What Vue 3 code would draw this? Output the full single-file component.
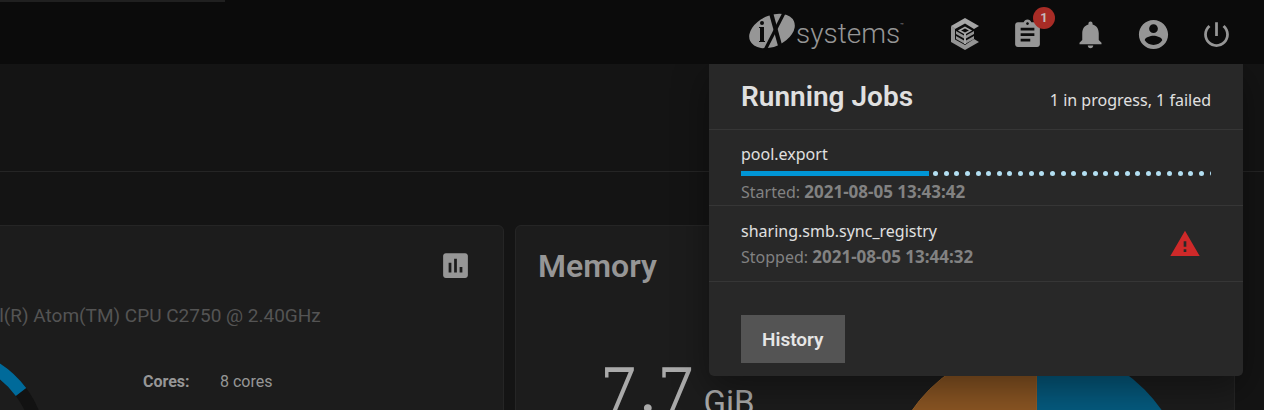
<script setup>
const jobs = [
  { name: 'pool.export', label: 'Started:', time: '2021-08-05 13:43:42', progress: 40 },
  { name: 'sharing.smb.sync_registry', label: 'Stopped:', time: '2021-08-05 13:44:32', failed: true },
]
const dots = 27
</script>

<template>
  <div class="page">
    <header class="topbar">
      <div class="loading"></div>
      <a class="brand" href="#" aria-label="iXsystems">
        <svg class="oval" viewBox="0 0 48 38" aria-hidden="true">
          <ellipse cx="24" cy="18" rx="24" ry="15.500" transform="rotate(-24 24 18)" fill="#969696" />
          <path d="M36 0L17 37" fill="none" stroke="#0b0b0b" stroke-width="3.200" />
          <path d="M23 0L33 36" fill="none" stroke="#0b0b0b" stroke-width="4.200" />
          <circle cx="14" cy="10" r="2" fill="#0b0b0b" />
          <path d="M12 14h4v14h1v1h-6v-1h1V15h-1v-1z" fill="#0b0b0b" />
        </svg>
        <span class="word">systems</span><span class="tm">™</span>
      </a>
      <nav class="actions">
        <button type="button" aria-label="TrueCommand">
          <svg width="30" height="32" viewBox="0 0 30 32" aria-hidden="true">
            <path fill="#a6a6a6" d="M15 0L29 8 24 11 15 5.500 5 11 1 8z" />
            <path fill="#949494" d="M1 8L5 10.500V21.500L15 27 24 21 29 24 15 32 1 24z" />
            <path fill="none" stroke="#a6a6a6" stroke-width="1.600" d="M15 9.500l5.500 3-5.500 3-5.500-3z" />
            <path fill="#949494" d="M6 13l8 4.500v3L6 16zM24 13l-8 4.500v3l8-4.500zM6 18l8 4.500v3L6 21zM24 18l-8 4.500v3l8-4.500z" />
            <path fill="#a6a6a6" d="M14 16h2v10h-2z" />
          </svg>
        </button>
        <button type="button" aria-label="Jobs">
          <svg width="33" height="33" viewBox="0 0 24 24" aria-hidden="true"><path d="M19 3h-4.180C14.400 1.840 13.300 1 12 1c-1.300 0-2.400.84-2.820 2H5c-1.100 0-2 .9-2 2v14c0 1.100.9 2 2 2h14c1.100 0 2-.9 2-2V5c0-1.100-.9-2-2-2zm-7 0c.55 0 1 .45 1 1s-.45 1-1 1-1-.45-1-1 .45-1 1-1zm2 14H7v-2h7v2zm3-4H7v-2h10v2zm0-4H7V7h10v2z" /></svg>
          <span class="badge">1</span>
        </button>
        <button type="button" aria-label="Alerts">
          <svg width="33" height="33" viewBox="0 0 24 24" aria-hidden="true"><path d="M12 22c1.100 0 2-.9 2-2h-4c0 1.100.89 2 2 2zm6-6v-5c0-3.070-1.640-5.640-4.500-6.320V4c0-.83-.67-1.500-1.500-1.500s-1.500.67-1.500 1.500v.68C7.630 5.360 6 7.920 6 11v5l-2 2v1h16v-1l-2-2z" /></svg>
        </button>
        <button type="button" aria-label="Account">
          <svg width="35" height="35" viewBox="0 0 24 24" aria-hidden="true"><path d="M12 2C6.480 2 2 6.480 2 12s4.480 10 10 10 10-4.480 10-10S17.520 2 12 2zm0 3c1.660 0 3 1.340 3 3s-1.340 3-3 3-3-1.340-3-3 1.340-3 3-3zm0 14.200c-2.500 0-4.710-1.280-6-3.220.03-1.990 4-3.080 6-3.080 1.990 0 5.970 1.090 6 3.080-1.290 1.940-3.500 3.220-6 3.220z" /></svg>
        </button>
        <button type="button" aria-label="Power">
          <svg width="33" height="33" viewBox="0 0 24 24" aria-hidden="true"><path d="M13 3h-2v10h2V3zm4.830 2.170l-1.420 1.420C17.990 7.860 19 9.810 19 12c0 3.870-3.130 7-7 7s-7-3.130-7-7c0-2.190 1.010-4.140 2.580-5.420L6.170 5.170C4.230 6.820 3 9.260 3 12c0 4.970 4.030 9 9 9s9-4.030 9-9c0-2.740-1.230-5.180-3.170-6.830z" /></svg>
        </button>
      </nav>

      <section class="panel" aria-label="Running Jobs">
        <div class="panel-head">
          <h2>Running Jobs</h2>
          <span class="summary">1 in progress, 1 failed</span>
        </div>
        <div v-for="job in jobs" :key="job.name" class="job" :class="{ active: job.progress }">
          <div class="job-body">
            <div class="job-name">{{ job.name }}</div>
            <div v-if="job.progress" class="progress" role="progressbar" :aria-label="job.name" :aria-valuenow="job.progress">
              <div class="bar" :style="{ width: job.progress + '%' }"></div>
              <div class="dots"><i v-for="n in dots" :key="n"></i></div>
            </div>
            <div class="job-time">{{ job.label }} <strong>{{ job.time }}</strong></div>
          </div>
          <svg v-if="job.failed" class="warn" viewBox="0 0 24 24" role="img" aria-label="Failed"><path d="M1 21h22L12 2 1 21zm12-3h-2v-2h2v2zm0-4h-2v-4h2v4z" /></svg>
        </div>
        <div class="panel-foot"><button type="button" class="history">History</button></div>
      </section>
    </header>

    <div class="subbar"></div>

    <main class="cards">
      <article class="card">
        <div class="card-head end">
          <button type="button" class="report" aria-label="CPU reports">
            <svg width="33" height="33" viewBox="0 0 24 24" aria-hidden="true"><path d="M19 3H5c-1.100 0-2 .9-2 2v14c0 1.100.9 2 2 2h14c1.100 0 2-.9 2-2V5c0-1.100-.9-2-2-2zM9 17H7v-7h2v7zm4 0h-2V7h2v10zm4 0h-2v-4h2v4z" /></svg>
          </button>
        </div>
        <p class="cpu-name">Intel(R) Atom(TM) CPU C2750 @ 2.40GHz</p>
        <div class="cpu">
          <svg class="donut" viewBox="-102 -102 204 204" aria-hidden="true">
            <circle r="95" fill="none" stroke="#121212" stroke-width="13" />
            <path d="M-95 0A95 95 0 0 1 76 -57" fill="none" stroke="#006a9a" stroke-width="13" />
          </svg>
          <dl><dt>Cores:</dt><dd>8 cores</dd></dl>
        </div>
      </article>

      <article class="card">
        <div class="card-head"><h3>Memory</h3></div>
        <div class="memory">
          <p class="amount"><span class="value">7.7</span><span class="unit">GiB</span></p>
          <svg class="pie" viewBox="-152 -152 304 304" aria-hidden="true">
            <path d="M0 0V-152A152 152 0 0 0 -152 0A152 152 0 0 0 0 152z" fill="#8a5523" stroke="#9a6229" />
            <path d="M0 0V-152A152 152 0 0 1 152 0A152 152 0 0 1 0 152z" fill="#055a7e" />
          </svg>
        </div>
      </article>
    </main>
  </div>
</template>

<style>
body { margin: 0; }
</style>

<style scoped>
.page { height: 100vh; overflow: hidden; background: #141414; color: #969696; font-family: Roboto, "Liberation Sans", sans-serif; }
.page * { box-sizing: border-box; }
h2, h3, p, dl, dd { margin: 0; }
button { border: 0; padding: 0; background: none; font: inherit; color: inherit; cursor: pointer; }
svg { display: block; fill: currentColor; flex: none; }

.topbar { position: relative; z-index: 2; height: 64px; padding-right: 16px; display: flex; align-items: center; justify-content: flex-end; background: #0b0b0b; }
.loading { position: absolute; top: 0; left: 0; width: 225px; height: 2px; background: #202020; }
.brand { display: flex; align-items: center; margin-right: 29px; color: #969696; text-decoration: none; }
.oval { width: 48px; height: 38px; }
.word { padding-top: 4px; font-size: 28px; line-height: 34px; font-weight: 300; }
.tm { align-self: flex-start; padding-top: 8px; font-size: 6px; line-height: 8px; }
.actions { display: flex; }
.actions button { position: relative; width: 63px; height: 64px; padding-top: 4px; display: flex; align-items: center; justify-content: center; }
.badge { position: absolute; top: 7px; right: 4px; width: 22px; height: 22px; border-radius: 50%; background: #a82c26; color: #c4bcbc; font-size: 13px; line-height: 21px; font-weight: 700; text-align: center; }

.panel { position: absolute; top: 100%; right: 21px; width: 534px; border-radius: 0 0 5px 5px; background: #282828; box-shadow: 0 12px 36px rgba(0, 0, 0, .4); clip-path: inset(0 -60px -60px -60px); color: #e0e0e0; font-family: "Noto Sans", "Open Sans", sans-serif; font-size: 16px; }
.panel-head { height: 66px; padding: 0 32px; display: flex; align-items: center; justify-content: space-between; border-bottom: 1px solid #363636; }
.panel-head h2 { font-family: Roboto, sans-serif; font-size: 28px; line-height: 40px; font-weight: 600; }
.summary { padding-top: 6px; }
.job { height: 76px; padding: 0 32px; display: flex; align-items: center; border-bottom: 1px solid #363636; }
.job.active { align-items: flex-end; }
.job-body { flex: 1; }
.job-name, .job-time { line-height: 26px; }
.job-time { color: #828282; }
.job-time strong { font-size: 17px; line-height: 20px; font-weight: 700; }
.progress { height: 5px; margin: 4px 0; display: flex; overflow: hidden; }
.active .job-time { line-height: 25px; }
.bar { flex: none; background: #0095d5; }
.dots { flex: 1; display: flex; justify-content: space-between; margin: 0 -4px 0 4px; }
.dots i { width: 5px; height: 5px; border-radius: 50%; background: #b3dff2; }
.warn { width: 32px; height: 32px; margin-right: 10px; color: #ce2929; }
.panel-foot { padding: 33px 32px 13px; }
.history { display: block; height: 48px; padding: 0 21px; background: #545454; color: #e6e6e6; font-family: Roboto, sans-serif; font-size: 19px; font-weight: 600; }

.subbar { height: 108px; border-bottom: 1px solid #252525; }
.cards { display: grid; grid-template-columns: 1fr 1fr; gap: 11px; margin: 53px 29px 0 -216px; }
.card { background: #1c1c1c; border: 1px solid #252525; border-radius: 6px; height: 500px; }
.card-head { height: 79px; padding: 0 22px; display: flex; align-items: center; }
.end { justify-content: flex-end; padding-right: 31px; }
h3 { font-size: 32px; line-height: 38px; font-weight: 600; }
.cpu-name { color: #545454; font-size: 19px; line-height: 22px; text-align: center; }
.cpu { display: flex; padding: 20px 0 0 58px; }
.donut { width: 204px; height: 204px; }
.cpu dl { display: flex; margin-left: 96px; padding-top: 24px; font-size: 16px; line-height: 22px; }
.cpu dt { width: 77px; font-weight: 700; }
.memory { display: flex; justify-content: space-between; padding: 40px 45px 0 84px; }
.amount { display: flex; align-items: flex-start; gap: 8px; color: #aaa; }
.value { padding-top: 9px; font: 60px/72px "DejaVu Serif", serif; }
.unit { padding-top: 38px; font-size: 33px; line-height: 40px; font-weight: 400; }
.pie { width: 304px; height: 304px; }
</style>
